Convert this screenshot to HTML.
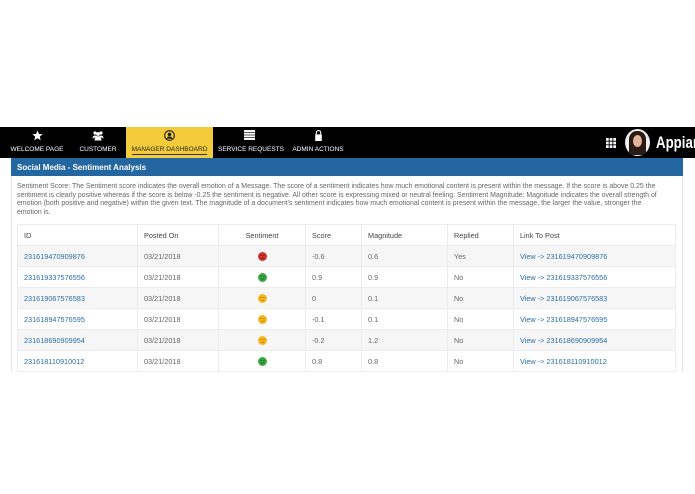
<!DOCTYPE html>
<html><head><meta charset="utf-8"><style>
*{margin:0;padding:0;box-sizing:border-box}
body{width:695px;height:494px;background:#fff;font-family:"Liberation Sans",sans-serif;position:relative;overflow:hidden}
.nav{position:absolute;left:0;top:127px;width:695px;height:31px;background:#000}
.tab{position:absolute;top:0;height:31px;color:#fff;font-size:6.5px;text-align:center}
.tab .ic{position:absolute;top:3px;left:0;right:0;height:11px}
.tab .lb{position:absolute;top:19px;left:0;right:0;white-space:nowrap}
.act{background:#f3cb3b;color:#222}
.act:after{content:"";position:absolute;left:6px;right:6px;bottom:3px;height:1.5px;background:#333}
.hdr{position:absolute;left:11px;top:158px;width:672px;height:18px;background:#2467a0;color:#fff;font-weight:bold;font-size:8px;padding:5px 6px}
.panel{position:absolute;left:11px;top:176px;width:672px;height:196px;border-left:1px solid #e6e6e6;border-right:1px solid #e6e6e6}
.desc{position:absolute;left:17px;top:183px;width:664px;font-size:6.95px;line-height:8.7px;color:#666}
table{position:absolute;left:17px;top:224px;width:659px;border-collapse:collapse;font-size:7.3px;color:#666}
td{height:21px;border:1px solid #ececec;padding:0 6px;vertical-align:middle}
tr.h td{color:#444}
tr.g td{background:#f6f6f6}
a{color:#2a6ea6;text-decoration:none}
.c{text-align:center}
.f{display:inline-block;vertical-align:middle}
</style></head><body>
<div class="nav">
 <div class="tab" style="left:5px;width:64px"><div class="ic"><svg width="11" height="11" viewBox="0 0 10 10"><path d="M5 0.5L6.3 3.6 9.6 3.8 7.1 6 7.9 9.3 5 7.5 2.1 9.3 2.9 6 0.4 3.8 3.7 3.6z" fill="#fff"/></svg></div><div class="lb">WELCOME PAGE</div></div>
 <div class="tab" style="left:74px;width:48px"><div class="ic"><svg width="12" height="11" viewBox="0 0 12 10"><circle cx="3" cy="2.5" r="1.6" fill="#fff"/><circle cx="9" cy="2.5" r="1.6" fill="#fff"/><circle cx="6" cy="3.5" r="1.9" fill="#fff"/><path d="M0.5 8c0-2 1.2-3 2.5-3s2 .6 2 1M11.5 8c0-2-1.2-3-2.5-3s-2 .6-2 1M2.5 10c0-3 1.6-4.3 3.5-4.3S9.5 7 9.5 10z" fill="#fff"/></svg></div><div class="lb">CUSTOMER</div></div>
 <div class="tab act" style="left:126px;width:87px"><div class="ic"><svg width="11" height="11" viewBox="0 0 10 10"><circle cx="5" cy="5" r="4.4" fill="none" stroke="#222" stroke-width="1"/><circle cx="5" cy="4" r="1.6" fill="#222"/><path d="M2.3 8c.6-1.6 1.5-2.2 2.7-2.2S7.1 6.4 7.7 8z" fill="#222"/></svg></div><div class="lb">MANAGER DASHBOARD</div></div>
 <div class="tab" style="left:218px;width:63px"><div class="ic"><svg width="11" height="10" viewBox="0 0 10 9"><rect x="0" y="0" width="10" height="1.8" fill="#fff"/><rect x="0" y="2.4" width="10" height="1.8" fill="#fff"/><rect x="0" y="4.8" width="10" height="1.8" fill="#fff"/><rect x="0" y="7.2" width="10" height="1.8" fill="#fff"/></svg></div><div class="lb">SERVICE REQUESTS</div></div>
 <div class="tab" style="left:290px;width:56px"><div class="ic"><svg width="9" height="11" viewBox="0 0 8 10"><rect x="1" y="4" width="6" height="6" fill="#fff"/><path d="M2 4V2.5a2 2 0 0 1 4 0V4" stroke="#fff" fill="none"/></svg></div><div class="lb">ADMIN ACTIONS</div></div>
 <svg style="position:absolute;left:606px;top:11px" width="10" height="10" viewBox="0 0 11 11" fill="#fff"><rect x="0" y="0" width="3" height="3"/><rect x="4" y="0" width="3" height="3"/><rect x="8" y="0" width="3" height="3"/><rect x="0" y="4" width="3" height="3"/><rect x="4" y="4" width="3" height="3"/><rect x="8" y="4" width="3" height="3"/><rect x="0" y="8" width="3" height="3"/><rect x="4" y="8" width="3" height="3"/><rect x="8" y="8" width="3" height="3"/></svg>
 <div style="position:absolute;left:625px;top:2px;width:25px;height:27px;border-radius:50%;background:#eee;overflow:hidden"><div style="position:absolute;left:4px;top:2px;width:17px;height:24px;border-radius:8px 8px 3px 3px;background:#2a1a14"></div><div style="position:absolute;left:8px;top:6px;width:9px;height:12px;border-radius:50%;background:#e2b59b"></div></div>
 <div style="position:absolute;left:656px;top:6px;color:#fff;font-size:17px;font-weight:bold;transform:scaleX(0.78);transform-origin:0 0;white-space:nowrap">Appian</div>
</div>
<div class="hdr">Social Media - Sentiment Analysis</div>
<div class="panel"></div>
<div class="desc">Sentiment Score: The Sentiment score indicates the overall emotion of a Message. The score of a sentiment indicates how much emotional content is present within the message. If the score is above 0.25 the sentiment is clearly positive whereas if the score is below -0.25 the sentiment is negative. All other score is expressing mixed or neutral feeling. Sentiment Magnitude: Magnitude indicates the overall strength of emotion (both positive and negative) within the given text. The magnitude of a document's sentiment indicates how much emotional content is present within the message, the larger the value, stronger the<br>emotion is.</div>
<table>
<colgroup><col style="width:120px"><col style="width:81px"><col style="width:87px"><col style="width:56px"><col style="width:86px"><col style="width:66px"><col></colgroup>
<tr class="h"><td>ID</td><td>Posted On</td><td class="c">Sentiment</td><td>Score</td><td>Magnitude</td><td>Replied</td><td>Link To Post</td></tr>
<tr class="g"><td><a>231619470909876</a></td><td>03/21/2018</td><td class="c"><svg class="f" width="9" height="9" viewBox="0 0 10 10"><circle cx="5" cy="5" r="5" fill="#d0332f"/><circle cx="3.4" cy="3.8" r=".8" fill="#7a1512"/><circle cx="6.6" cy="3.8" r=".8" fill="#7a1512"/><path d="M3 7.5q2-1.8 4 0" stroke="#7a1512" fill="none" stroke-width=".8"/></svg></td><td>-0.6</td><td>0.6</td><td>Yes</td><td><a>View -&gt; 231619470909876</a></td></tr>
<tr><td><a>231619337576556</a></td><td>03/21/2018</td><td class="c"><svg class="f" width="9" height="9" viewBox="0 0 10 10"><circle cx="5" cy="5" r="5" fill="#3aaa44"/><circle cx="3.4" cy="3.8" r=".8" fill="#175c1d"/><circle cx="6.6" cy="3.8" r=".8" fill="#175c1d"/><path d="M3 6q2 2 4 0" stroke="#175c1d" fill="none" stroke-width=".8"/></svg></td><td>0.9</td><td>0.9</td><td>No</td><td><a>View -&gt; 231619337576556</a></td></tr>
<tr class="g"><td><a>231619067576583</a></td><td>03/21/2018</td><td class="c"><svg class="f" width="9" height="9" viewBox="0 0 10 10"><circle cx="5" cy="5" r="5" fill="#f4b71e"/><circle cx="3.4" cy="3.8" r=".8" fill="#a66f00"/><circle cx="6.6" cy="3.8" r=".8" fill="#a66f00"/><path d="M3 6.6q2 .8 4 0" stroke="#a66f00" fill="none" stroke-width=".8"/></svg></td><td>0</td><td>0.1</td><td>No</td><td><a>View -&gt; 231619067576583</a></td></tr>
<tr><td><a>231618947576595</a></td><td>03/21/2018</td><td class="c"><svg class="f" width="9" height="9" viewBox="0 0 10 10"><circle cx="5" cy="5" r="5" fill="#f4b71e"/><circle cx="3.4" cy="3.8" r=".8" fill="#a66f00"/><circle cx="6.6" cy="3.8" r=".8" fill="#a66f00"/><path d="M3 6.6q2 .8 4 0" stroke="#a66f00" fill="none" stroke-width=".8"/></svg></td><td>-0.1</td><td>0.1</td><td>No</td><td><a>View -&gt; 231618947576595</a></td></tr>
<tr class="g"><td><a>231618690909954</a></td><td>03/21/2018</td><td class="c"><svg class="f" width="9" height="9" viewBox="0 0 10 10"><circle cx="5" cy="5" r="5" fill="#f4b71e"/><circle cx="3.4" cy="3.8" r=".8" fill="#a66f00"/><circle cx="6.6" cy="3.8" r=".8" fill="#a66f00"/><path d="M3 6.6q2 .8 4 0" stroke="#a66f00" fill="none" stroke-width=".8"/></svg></td><td>-0.2</td><td>1.2</td><td>No</td><td><a>View -&gt; 231618690909954</a></td></tr>
<tr><td><a>231618110910012</a></td><td>03/21/2018</td><td class="c"><svg class="f" width="9" height="9" viewBox="0 0 10 10"><circle cx="5" cy="5" r="5" fill="#3aaa44"/><circle cx="3.4" cy="3.8" r=".8" fill="#175c1d"/><circle cx="6.6" cy="3.8" r=".8" fill="#175c1d"/><path d="M3 6q2 2 4 0" stroke="#175c1d" fill="none" stroke-width=".8"/></svg></td><td>0.8</td><td>0.8</td><td>No</td><td><a>View -&gt; 231618110910012</a></td></tr>
</table>
</body></html>
